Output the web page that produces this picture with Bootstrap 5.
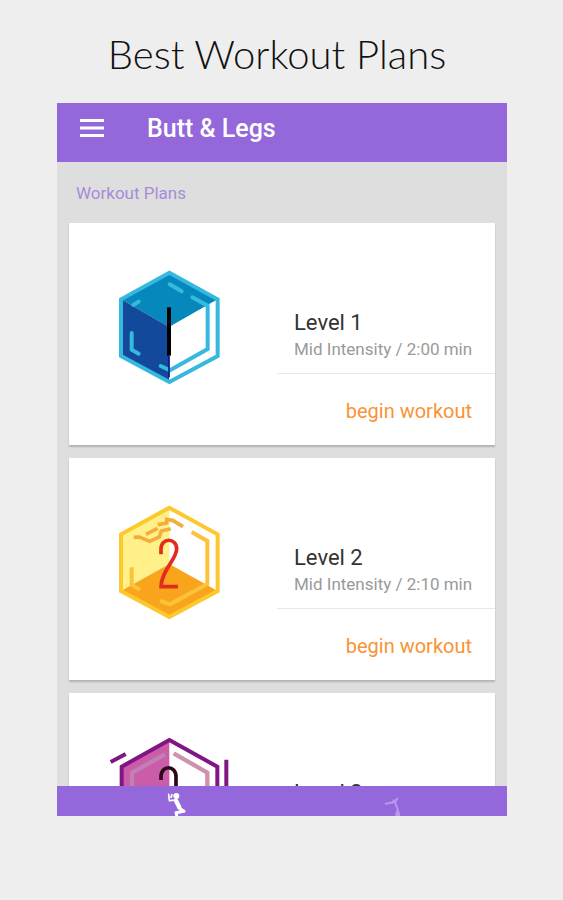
<!DOCTYPE html>
<html lang="en">
<head>
<meta charset="utf-8">
<meta name="viewport" content="width=device-width, initial-scale=1">
<title>Best Workout Plans</title>
<link href="https://cdn.jsdelivr.net/npm/bootstrap@5.3.0/dist/css/bootstrap.min.css" rel="stylesheet">
<style>
body{background:#eee;font-family:Roboto,"Liberation Sans",sans-serif;color:#333}
.promo{padding:0 56px 84px 57px}
.headline{font:300 40px/48px Lato,"Open Sans",sans-serif;color:#111;padding:30px 10px 25px 0}
.app{background:#dedede;min-height:0}
.topbar{background:#9468da;height:59px;padding:0 22px;gap:42px}
.topbar h2{font-size:25px;line-height:32px;font-weight:500;color:#fff;padding-bottom:7px}
.menu-btn{padding-bottom:10px}
.plans{padding:19px 12px 0;min-height:0}
.plans h3{font-size:17px;line-height:24px;font-weight:400;color:#a78cdb;margin:0 0 18px;padding-left:7px}
.plan{height:222px;border-radius:1px;box-shadow:0 2px 2px #0003}
.plan-list{gap:13px}
.art{width:208px;padding:37px 0 0 36px}
.level{font-size:22px;line-height:28px;color:#333}
.detail{font-size:17px;line-height:24px;min-height:24px;font-weight:400;color:#999}
.info{padding:0 17px 12px 17px;border-bottom:1px solid #e8e8e8;height:151px}
.begin{font-size:20px;line-height:28px;color:#f99336;padding:2px 23px 0;height:71px}
.tabs{background:#9468da;height:30px}
.tabs a{min-width:0;overflow:hidden;height:30px}
</style>
<script defer src="https://cdn.jsdelivr.net/npm/bootstrap@5.3.0/dist/js/bootstrap.bundle.min.js"></script>
</head>
<body>
<main class="promo vh-100 d-flex flex-column overflow-hidden">
  <h1 class="headline text-center text-nowrap m-0">Best Workout Plans</h1>
  <section class="app d-flex flex-column flex-fill overflow-hidden">
    <header class="topbar d-flex align-items-center flex-shrink-0">
      <button class="menu-btn btn border-0 rounded-0 px-0 pt-0 lh-1" aria-label="Open menu">
        <svg width="26" height="20" viewBox="0 0 26 20" stroke="#fff" stroke-width="3"><path d="M1 2.500h24M1 10h24M1 17.500h24"/></svg>
      </button>
      <h2 class="m-0">Butt &amp; Legs</h2>
    </header>
    <div class="plans flex-fill overflow-hidden">
      <h3>Workout Plans</h3>
      <div class="plan-list d-flex flex-column">
        <article class="plan bg-white d-flex flex-shrink-0">
          <div class="art flex-shrink-0">
            <svg width="130" height="135" viewBox="0 0 390 405" fill="none" aria-hidden="true">
              <path d="M193 38L338 118 193 201 48 118z" fill="#0788bd"/>
              <path d="M48 118L193 201V366L48 288z" fill="#12499b"/>
              <path d="M193 201L326 125V285L193 360z" fill="#fff"/>
              <path d="M193 38L338 118V288L193 366 48 288V118z" stroke="#35b9df" stroke-width="12"/>
              <g stroke="#35b9df" stroke-width="12" stroke-linecap="round"><path d="M194 73L230 94M262 112L308 137V267L195 331 167 318M85 135L101 125M80 219V269L101 281"/></g>
              <path d="M192 142V287" stroke="#000" stroke-width="12"/>
              <path d="M192 287V352" stroke="#0a168a" stroke-width="5"/>
            </svg>
          </div>
          <div class="flex-fill">
            <div class="info d-flex flex-column justify-content-end"><div class="level">Level 1</div><div class="detail text-nowrap">Mid Intensity / 2:00 min</div></div>
            <div class="begin d-flex align-items-center justify-content-end"><a class="text-reset text-decoration-none" href="#level-1">begin workout</a></div>
          </div>
        </article>
        <article class="plan bg-white d-flex flex-shrink-0">
          <div class="art flex-shrink-0">
            <svg width="130" height="135" viewBox="0 0 390 405" fill="none" aria-hidden="true">
              <path d="M193 38V207L48 288V118z" fill="#fff08a"/>
              <path d="M193 207L338 288 193 366 48 288z" fill="#f8a51d"/>
              <path d="M193 38L338 118V288L193 366 48 288V118z" stroke="#fcc82d" stroke-width="12"/>
              <g stroke="#fcc23a" stroke-width="12"><path d="M260 111L307 138V267L195 328 165 317M80 217V270L105 284"/></g>
              <g stroke="#f3ad3b" stroke-width="11"><path d="M86 127L103 126 134 139 163 126 169 108 197 101M123 118L158 100M158 89L185 84V73L203 76 234 95"/></g>
              <path d="M168 178V162C168 127 215 127 215 162C215 192 168 230 168 275H219" stroke="#e52b20" stroke-width="11"/>
            </svg>
          </div>
          <div class="flex-fill">
            <div class="info d-flex flex-column justify-content-end"><div class="level">Level 2</div><div class="detail text-nowrap">Mid Intensity / 2:10 min</div></div>
            <div class="begin d-flex align-items-center justify-content-end"><a class="text-reset text-decoration-none" href="#level-2">begin workout</a></div>
          </div>
        </article>
        <article class="plan bg-white d-flex flex-shrink-0">
          <div class="art flex-shrink-0">
            <svg width="130" height="135" viewBox="0 0 390 405" fill="none" overflow="visible" aria-hidden="true">
              <path d="M193 30V358L50 278V110z" fill="#cb5caa"/>
              <path d="M193 30L337 110V278L193 358 50 278V110z" stroke="#811581" stroke-width="12"/>
              <path d="M180 73L81 128V260L193 323" stroke="#c080b4" stroke-width="13"/>
              <path d="M206 70L307 128V260L193 323" stroke="#cf91ad" stroke-width="13"/>
              <path d="M17 96L62 72M364 89V190" stroke="#811581" stroke-width="12"/>
              <path d="M168 150V141C168 104 213 104 213 141V190" stroke="#300716" stroke-width="11"/>
            </svg>
          </div>
          <div class="flex-fill">
            <div class="info d-flex flex-column justify-content-end"><div class="level">Level 3</div><div class="detail"></div></div>
          </div>
        </article>
      </div>
    </div>
    <nav class="tabs d-flex flex-shrink-0" aria-label="Workouts">
      <a href="#squats" class="w-50 d-flex justify-content-center" aria-label="Squats">
        <svg width="60" height="30" viewBox="-17 18 180 90" fill="none" stroke="#fff" stroke-linecap="round" stroke-linejoin="round"><circle cx="92" cy="48" r="9" fill="#fff" stroke="none"/><path d="M91 62L101 82" stroke-width="13"/><path d="M90 60L71 62 69 43M79 44L76 52" stroke-width="5"/><path d="M100 84L115 94 91 98 93 106" stroke-width="9"/></svg>
      </a>
      <a href="#legs" class="w-50 d-flex justify-content-center" aria-label="Leg raises">
        <svg width="60" height="30" viewBox="-17 18 180 90" fill="none" stroke="#b798ed" stroke-linecap="round"><circle cx="71" cy="64" r="6" fill="#b798ed" stroke="none"/><path d="M80 56L73 66 45 71M73 66L81 88V104" stroke-width="6"/><path d="M81 100V107" stroke-width="14"/></svg>
      </a>
    </nav>
  </section>
</main>
</body>
</html>
